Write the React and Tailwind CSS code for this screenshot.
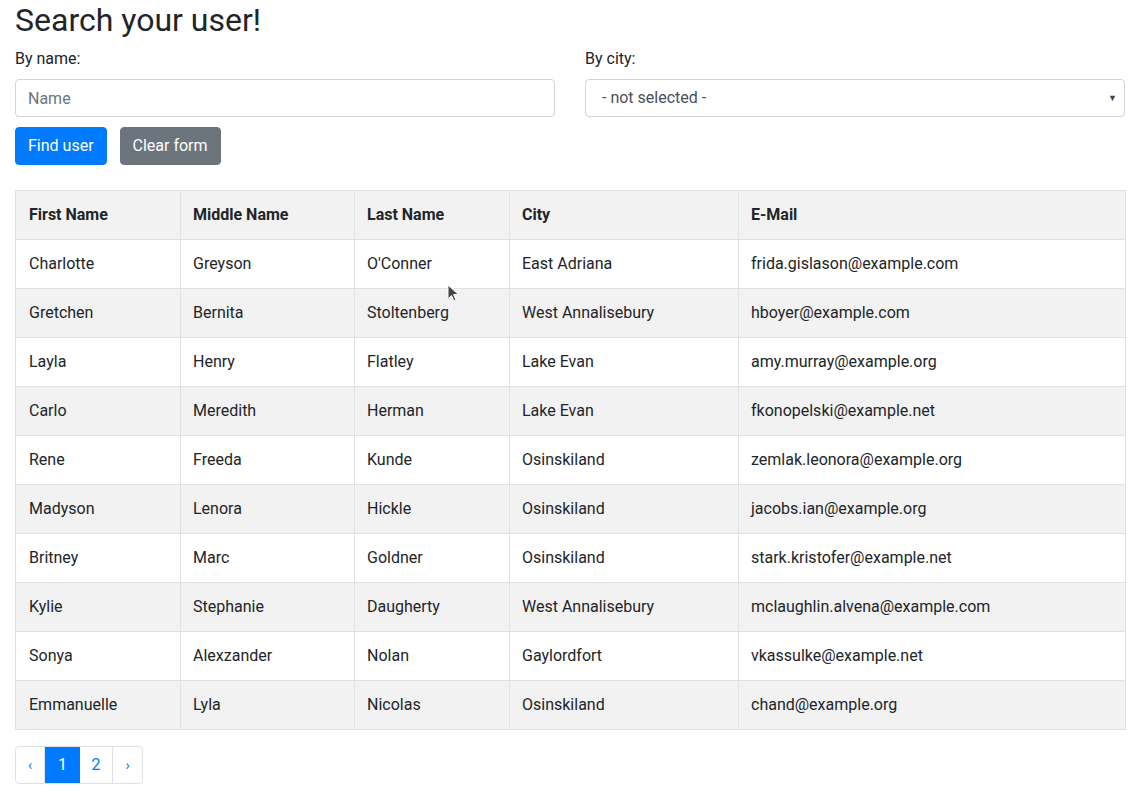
import React from "react";

const rows = [
  ["Charlotte", "Greyson", "O'Conner", "East Adriana", "frida.gislason@example.com"],
  ["Gretchen", "Bernita", "Stoltenberg", "West Annalisebury", "hboyer@example.com"],
  ["Layla", "Henry", "Flatley", "Lake Evan", "amy.murray@example.org"],
  ["Carlo", "Meredith", "Herman", "Lake Evan", "fkonopelski@example.net"],
  ["Rene", "Freeda", "Kunde", "Osinskiland", "zemlak.leonora@example.org"],
  ["Madyson", "Lenora", "Hickle", "Osinskiland", "jacobs.ian@example.org"],
  ["Britney", "Marc", "Goldner", "Osinskiland", "stark.kristofer@example.net"],
  ["Kylie", "Stephanie", "Daugherty", "West Annalisebury", "mclaughlin.alvena@example.com"],
  ["Sonya", "Alexzander", "Nolan", "Gaylordfort", "vkassulke@example.net"],
  ["Emmanuelle", "Lyla", "Nicolas", "Osinskiland", "chand@example.org"],
];

const widths = ["w-[165px]", "w-[174px]", "w-[155px]", "w-[229px]", "w-[387px]"];

export default function App() {
  return (
    <div className="relative min-h-[794px] bg-white px-[15px] pt-[1px] text-[#212529] text-[16px] leading-[24px]" style={{ fontFamily: "Roboto, 'Liberation Sans', sans-serif" }}>
      <h2 className="m-0 text-[32px] leading-[38.4px] font-normal mb-[8px]">Search your user!</h2>
      <div className="flex w-[1110px] gap-[30px]">
        <div className="w-[540px]">
          <label className="block mb-[8px]">By name:</label>
          <input
            placeholder="Name"
            className="block w-full h-[38px] border border-[#ced4da] rounded-[4px] px-[12px] text-[16px] text-[#495057] placeholder:text-[#6c757d] outline-none"
          />
        </div>
        <div className="w-[540px]">
          <label className="block mb-[8px]">By city:</label>
          <div className="relative h-[38px] border border-[#ced4da] rounded-[4px] pl-[16px] flex items-center text-[#495057]">
            - not selected -
            <span className="absolute right-[7px] top-[12px] text-[9px] leading-[12px] text-[#444]">▼</span>
          </div>
        </div>
      </div>
      <div className="flex gap-[13px] mt-[10px]">
        <button className="h-[38px] px-[12px] rounded-[4px] bg-[#007bff] text-white border border-[#007bff]">Find user</button>
        <button className="h-[38px] px-[12px] rounded-[4px] bg-[#6c757d] text-white border border-[#6c757d]">Clear form</button>
      </div>
      <table className="mt-[25px] w-[1110px] border-collapse border border-[#dee2e6] table-fixed">
        <thead>
          <tr className="bg-[#f2f2f2]">
            {["First Name", "Middle Name", "Last Name", "City", "E-Mail"].map((h, i) => (
              <th key={h} className={`${widths[i]} h-[49px] border border-[#dee2e6] ${i === 0 ? "pl-[13px]" : "pl-[12px]"} pr-[12px] text-left font-bold align-middle`}>{h}</th>
            ))}
          </tr>
        </thead>
        <tbody>
          {rows.map((r, ri) => (
            <tr key={ri} className={ri % 2 === 1 ? "bg-[#f2f2f2]" : "bg-white"}>
              {r.map((c, ci) => (
                <td key={ci} className={`h-[49px] border border-[#dee2e6] ${ci === 0 ? "pl-[13px]" : "pl-[12px]"} pr-[12px] align-middle`}>{c}</td>
              ))}
            </tr>
          ))}
        </tbody>
      </table>
      <div className="mt-[16px] inline-flex h-[38px] border border-[#dee2e6] rounded-[4px] overflow-hidden text-[#007bff]">
        <div className="w-[29px] flex items-center justify-center border-r border-[#dee2e6] text-[14px]">‹</div>
        <div className="w-[35px] flex items-center justify-center bg-[#007bff] text-white">1</div>
        <div className="w-[33px] flex items-center justify-center border-r border-[#dee2e6]">2</div>
        <div className="w-[29px] flex items-center justify-center text-[14px]">›</div>
      </div>
      <svg className="absolute left-[447px] top-[284px]" width="14" height="20" viewBox="0 0 14 20">
        <path d="M1 1 L1 15 L4.5 11.5 L7 17 L9 16 L6.6 10.6 L11.5 10.6 Z" fill="#444" stroke="#fff" strokeWidth="1" />
      </svg>
    </div>
  );
}
